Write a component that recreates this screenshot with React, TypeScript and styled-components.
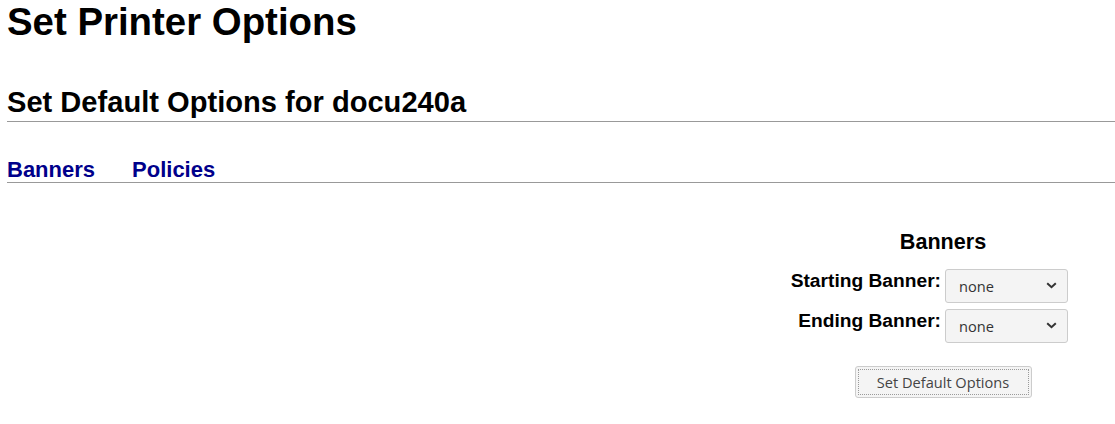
import React from "react";
import styled, { createGlobalStyle } from "styled-components";

const GlobalStyle = createGlobalStyle`
  html, body {
    margin: 0;
    padding: 0;
    background: #ffffff;
    color: #000000;
    font-family: "Liberation Sans", Arial, sans-serif;
  }
`;

const Page = styled.div`
  padding: 0 0 0 7px;
`;

const Title = styled.h1`
  margin: 0;
  font-size: 38.4px;
  line-height: 44px;
  font-weight: bold;
`;

const SubTitle = styled.h2`
  margin: 42px 0 0 0;
  padding-bottom: 2px;
  font-size: 29.1px;
  line-height: 33px;
  font-weight: bold;
  border-bottom: 1px solid #999999;
`;

const TabBar = styled.nav`
  display: flex;
  gap: 37px;
  margin-top: 35px;
  height: 25px;
  border-bottom: 1px solid #999999;
`;

const TabLink = styled.a`
  font-size: 22px;
  line-height: 25px;
  font-weight: bold;
  color: #00008b;
  text-decoration: none;
  cursor: pointer;
`;

const FormBlock = styled.form`
  margin: 46px 0 0 auto;
  width: 344px;
  display: flex;
  flex-direction: column;
  align-items: center;
`;

const SectionHeading = styled.h3`
  margin: 0 0 15px 0;
  font-size: 21.6px;
  line-height: 25px;
  font-weight: bold;
`;

const OptionGrid = styled.div`
  align-self: stretch;
  display: grid;
  grid-template-columns: 170px 123px;
  column-gap: 4px;
  row-gap: 6px;
  align-items: start;
`;

const Label = styled.label`
  text-align: right;
  font-size: 19.2px;
  line-height: 22px;
  font-weight: bold;
  padding-top: 0.5px;
`;

const SelectWrap = styled.div`
  position: relative;
  width: 123px;
  height: 34px;
`;

const Select = styled.select`
  appearance: none;
  -webkit-appearance: none;
  box-sizing: border-box;
  width: 100%;
  height: 34px;
  padding: 0 28px 0 13px;
  border: 1px solid #cccccc;
  border-radius: 3px;
  background: #f4f4f4;
  color: #333333;
  font-family: "Open Sans", "Noto Sans", sans-serif;
  font-size: 14.6px;
  outline: none;
`;

const Chevron = styled.svg`
  position: absolute;
  right: 11px;
  top: 13px;
  width: 11px;
  height: 7px;
  pointer-events: none;
`;

const SubmitButton = styled.button`
  margin-top: 23px;
  box-sizing: border-box;
  width: 177px;
  height: 32px;
  border: 1px solid #cccccc;
  border-radius: 3px;
  background: #f4f4f4;
  color: #444444;
  font-family: "Open Sans", "Noto Sans", sans-serif;
  font-size: 14.6px;
  outline: 1px dotted #9a9a9a;
  outline-offset: -4px;
  cursor: pointer;
`;

const ChevronIcon = () => (
  <Chevron viewBox="0 0 11 7">
    <polyline points="1.2,1.2 5.5,5.2 9.8,1.2" fill="none" stroke="#333" strokeWidth="2" />
  </Chevron>
);

const options = [
  { id: "job-sheets-start", label: "Starting Banner:" },
  { id: "job-sheets-end", label: "Ending Banner:" },
];

export default function App() {
  return (
    <>
      <GlobalStyle />
      <Page>
        <Title>Set Printer Options</Title>
        <SubTitle>Set Default Options for docu240a</SubTitle>
        <TabBar>
          <TabLink>Banners</TabLink>
          <TabLink>Policies</TabLink>
        </TabBar>
        <FormBlock onSubmit={(e) => e.preventDefault()}>
          <SectionHeading>Banners</SectionHeading>
          <OptionGrid>
            {options.map((o) => (
              <React.Fragment key={o.id}>
                <Label htmlFor={o.id}>{o.label}</Label>
                <SelectWrap>
                  <Select id={o.id} defaultValue="none">
                    <option value="none">none</option>
                    <option value="classified">classified</option>
                    <option value="confidential">confidential</option>
                    <option value="standard">standard</option>
                  </Select>
                  <ChevronIcon />
                </SelectWrap>
              </React.Fragment>
            ))}
          </OptionGrid>
          <SubmitButton type="submit">Set Default Options</SubmitButton>
        </FormBlock>
      </Page>
    </>
  );
}
